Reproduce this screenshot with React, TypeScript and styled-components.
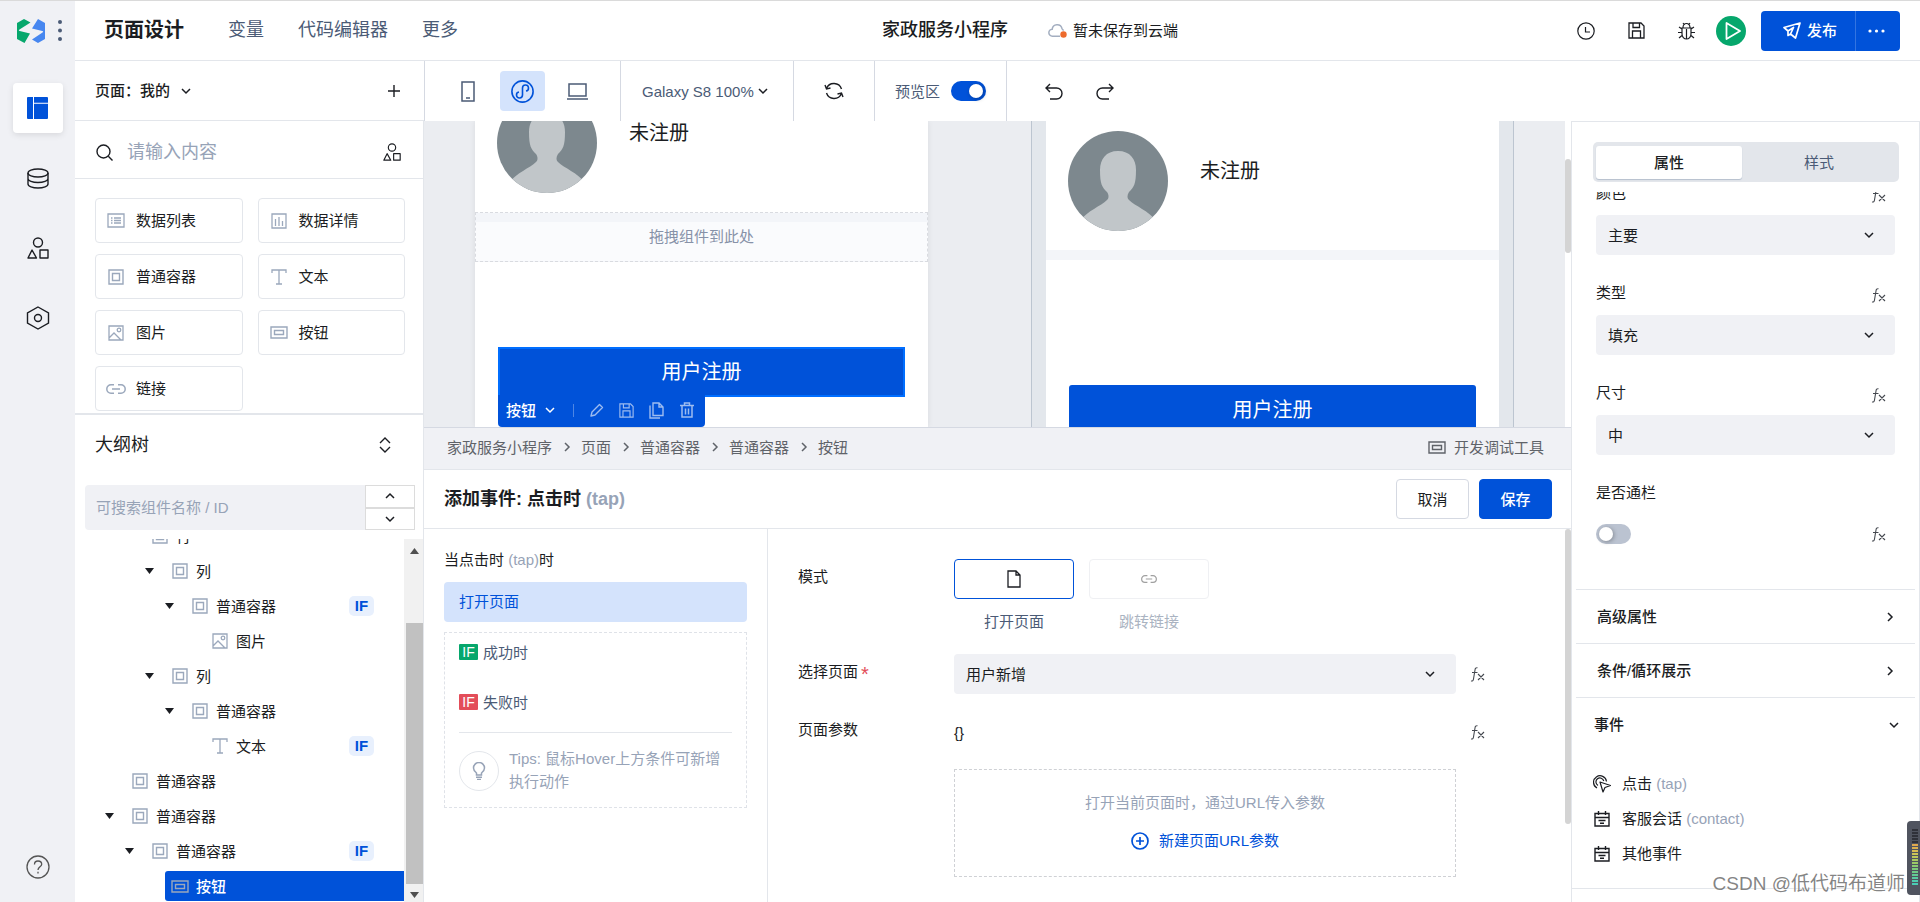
import React from 'react';
import styled, { createGlobalStyle, css } from 'styled-components';

const c = {
  blue: '#0052d9',
  blueSoft: '#d4e3fc',
  ink: '#1b1d22',
  slate: '#4b5b76',
  mute: '#97a3b7',
  line: '#e3e6eb',
  lineStrong: '#d5d9e2',
  fill: '#f0f1f5',
  canvas: '#ebedf1',
  green: '#06a76c',
  red: '#e34d59',
};

const Global = createGlobalStyle`
  * { box-sizing: border-box; }
  body {
    margin: 0;
    background: #fff;
    color: ${c.ink};
    font-family: "Liberation Sans", "Noto Sans CJK SC", sans-serif;
    font-size: 15px;
    line-height: 23px;
  }
  button, input, select { font: inherit; color: inherit; margin: 0; }
  h1, h2, h3, p, ul { margin: 0; padding: 0; font-size: inherit; font-weight: inherit; }
  li { list-style: none; }
  svg { display: block; flex: none; }
`;

/* ---------- icons ---------- */

const Svg = ({ w = 20, h = w, sw = 1.3, children }: { w?: number; h?: number; sw?: number; children: React.ReactNode }) => (
  <svg width={w} height={h} viewBox={`0 0 ${w} ${h}`} fill="none" stroke="currentColor" strokeWidth={sw} aria-hidden="true">
    {children}
  </svg>
);

const LogoIcon = () => (
  <svg width="28" height="24" viewBox="0 0 28 24" aria-hidden="true">
    <path d="M0 4L7 0l6.500 3.500L2.500 10.500c-1 .7-.8 1.300.2 1.500L13 14.500 7.500 24 0 20z" fill="#06a76c" />
    <path d="M21 0l7 4v16l-7 4-6-3.500 10.500-7c1-.7.8-1.300-.2-1.500L15 9.500z" fill="#4787f0" />
  </svg>
);
const DotsV = () => (
  <svg width="4" height="22" viewBox="0 0 4 22" fill={c.slate} aria-hidden="true">
    <circle cx="2" cy="2" r="2" /><circle cx="2" cy="10.500" r="2" /><circle cx="2" cy="19" r="2" />
  </svg>
);
const DotsH = () => (
  <svg width="17" height="4" viewBox="0 0 17 4" fill="#fff" aria-hidden="true">
    <circle cx="2" cy="2" r="1.600" /><circle cx="8.500" cy="2" r="1.600" /><circle cx="15" cy="2" r="1.600" />
  </svg>
);
const LayoutIcon = () => (
  <svg width="21" height="22" viewBox="0 0 21 22" fill={c.blue} aria-hidden="true">
    <path d="M1 0h5v22H1a1 1 0 0 1-1-1V1a1 1 0 0 1 1-1zM7 0h13a1 1 0 0 1 1 1v4.800H7zM7 6.800h14V21a1 1 0 0 1-1 1H7z" />
  </svg>
);
const DatabaseIcon = () => (
  <Svg w={22} h={21} sw={1.4}>
    <ellipse cx="11" cy="5" rx="10" ry="4" />
    <path d="M1 5v11c0 2.200 4.500 4 10 4s10-1.800 10-4V5M1 10.500c0 2.200 4.500 4 10 4s10-1.800 10-4" />
  </Svg>
);
const ShapesIcon = ({ small }: { small?: boolean }) => (
  <svg width={small ? 18 : 22} height={small ? 18 : 22} viewBox="0 0 22 22" fill="none" stroke="currentColor" strokeWidth={1.400} aria-hidden="true">
    <circle cx="11" cy="5.500" r="4.500" /><path d="M5 13l-4 8h8.500zM13 13h8v8h-8z" strokeLinejoin="round" />
  </svg>
);
const HexIcon = () => (
  <Svg w={24} sw={1.4}><path d="M12 1l10.500 5.800v10.400L12 23 1.500 17.200V6.800z" /><circle cx="12" cy="12" r="3.500" /></Svg>
);
const HelpIcon = () => (
  <Svg w={24} sw={1.3}><circle cx="12" cy="12" r="11" /><path d="M8.500 9.500C8.500 7 10 6 12 6s3.700 1.200 3.700 3.200c0 2.500-3.700 2.800-3.700 5.800M12 16.800v1.700" /></Svg>
);
const Chevron = ({ dir = 'down', s = 10 }: { dir?: 'down' | 'up' | 'right'; s?: number }) => (
  <svg width={s} height={s} viewBox="0 0 10 10" fill="none" stroke="currentColor" strokeWidth={1.500} aria-hidden="true">
    <path d={dir === 'down' ? 'M1 3l4 4 4-4' : dir === 'up' ? 'M1 7l4-4 4 4' : 'M3 1l4 4-4 4'} />
  </svg>
);
const PlusIcon = () => <Svg w={12} sw={1.4}><path d="M6 0v12M0 6h12" /></Svg>;
const SearchIcon = () => <Svg w={17} sw={1.4}><circle cx="7.500" cy="7.500" r="6.500" /><path d="M12.300 12.300L16.500 16.500" /></Svg>;
const ExpandIcon = () => <Svg w={12} h={16} sw={1.4}><path d="M1 6l5-5 5 5M1 10l5 5 5-5" /></Svg>;
const PhoneIcon = () => <Svg w={14} h={21} sw={1.5}><path d="M1 1h12v19H1zM5 17h4" /></Svg>;
const MiniIcon = () => (
  <Svg w={23} sw={1.6}>
    <circle cx="11.500" cy="11.500" r="10.600" />
    <path d="M11.500 8v7a3 3 0 1 1-3.500-3M11.500 15V8a3 3 0 1 1 3.500 3" />
  </Svg>
);
const LaptopIcon = () => <Svg w={21} h={17} sw={1.5}><path d="M2 1h17v12H2zM0 16h21" /></Svg>;
const RefreshIcon = () => (
  <Svg w={20} sw={1.4}>
    <path d="M2.500 7.500A8 8 0 0 1 17.500 8M17.500 12.500A8 8 0 0 1 2.500 12M1 4l1.500 4 4-1M19 16l-1.500-4-4 1" />
  </Svg>
);
const UndoIcon = () => <Svg w={18} h={17} sw={1.4}><path d="M5 1L1 5l4 4M1 5h10.500a5.500 5.500 0 0 1 0 11H5" /></Svg>;
const RedoIcon = () => <Svg w={18} h={17} sw={1.4}><path d="M13 1l4 4-4 4M17 5H6.500a5.500 5.500 0 0 0 0 11H13" /></Svg>;
const CloudIcon = () => (
  <svg width="19" height="15" viewBox="0 0 19 15" fill="none" aria-hidden="true">
    <path d="M12 13.200H4.500a3.500 3.500 0 0 1-.3-7A5 5 0 0 1 14 5.500c.3 1 .8 1.600 1.800 1.900" stroke="#a3aec0" strokeWidth="1.500" />
    <circle cx="15.500" cy="11.500" r="3.200" fill="#ed6b2d" />
  </svg>
);
const ClockIcon = () => <Svg w={18} sw={1.2}><circle cx="9" cy="9" r="8.200" /><path d="M8.500 5v5h4.500" /></Svg>;
const SaveIcon = ({ s = 17 }: { s?: number }) => (
  <svg width={s} height={s} viewBox="0 0 17 17" fill="none" stroke="currentColor" strokeWidth={1.300} aria-hidden="true">
    <path d="M1 1h12l3 3v12H1zM5 1v4.500h6.500V1M4.500 16V9h8v7" />
  </svg>
);
const BugIcon = () => (
  <Svg w={17} h={18} sw={1.2}>
    <path d="M5 5.500a3.500 4 0 0 1 7 0M4 6h9v6a4.500 5 0 0 1-9 0zM8.500 7v10M1 5l3 2M16 5l-3 2M0 10.500h4M13 10.500h4M1 16l3-2.500M16 16l-3-2.500M5 1l1.500 2M12 1l-1.500 2" />
  </Svg>
);
const PlayIcon = () => <Svg w={16} h={20} sw={1.8}><path d="M1.500 2v16L15 10z" strokeLinejoin="round" /></Svg>;
const SendIcon = () => <Svg w={18} h={17} sw={1.7}><path d="M17 1L1 5.500l4 3.500v4.500l2.500-1.500 5 4zM5 9l5.500-3.500L7.500 12" strokeLinejoin="round" /></Svg>;
const PencilIcon = () => <Svg w={15} sw={1.4}><path d="M2 13l1-4L10.500 1.500l3 3L6 12z" strokeLinejoin="round" /></Svg>;
const CopyIcon = () => <Svg w={15} h={17} sw={1.4}><path d="M4 1h6l4 4v8.500H4zM10 1v4h4M1 3.500V16h10" /></Svg>;
const TrashIcon = () => <Svg w={14} h={16} sw={1.5}><path d="M0 3.500h14M4.500 3V1h5v2M2 4v11h10V4M5.500 6.500v6M8.500 6.500v6" /></Svg>;
const FileIcon = () => <Svg w={14} h={18} sw={1.3}><path d="M1 1h8l4 4v12H1zM9 1v4h4" /></Svg>;
const LinkIcon = ({ w = 20 }: { w?: number }) => (
  <svg width={w} height={w / 2} viewBox="0 0 20 10" fill="none" stroke="currentColor" strokeWidth={1.500} aria-hidden="true">
    <path d="M8 .8H5a4.200 4.200 0 0 0 0 8.400h3M12 .8h3a4.200 4.200 0 0 1 0 8.400h-3M6 5h8" />
  </svg>
);
const ListIcon = () => (
  <Svg w={18} h={15}><path d="M1 1h16v13H1zM4 5h1.500M7 5h7M4 7.500h1.500M7 7.500h7M4 10h1.500M7 10h7" /></Svg>
);
const ChartIcon = () => <Svg w={16}><path d="M1 1h14v14H1zM4.500 6v7M8 4v9M11.500 8v5" /></Svg>;
const BoxIcon = () => <Svg w={16} sw={1.4}><path d="M1 1h14v14H1zM4.500 4.500h7v7h-7z" /></Svg>;
const TextIcon = () => <Svg w={16} sw={1.3}><path d="M1 4V1h14v3M8 1v14M5 15h6" /></Svg>;
const ImageIcon = () => <Svg w={16}><path d="M1 1h14v14H1zM1 13l5-5 7 7" /><circle cx="11" cy="5" r="1.800" /></Svg>;
const ButtonIcon = () => <Svg w={18} h={13} sw={1.4}><path d="M1 1h16v11H1zM4.500 4.500h9v4h-9z" /></Svg>;
const BulbIcon = () => (
  <Svg w={14} h={18} sw={1.5}><path d="M4.500 13v-2C2.500 9.500 1.500 8 1.500 6a5.500 5.500 0 0 1 11 0c0 2-1 3.500-3 5v2zM4 15.300h6M5 17.500h4" /></Svg>
);
const AddCircleIcon = () => <Svg w={18} sw={1.7}><circle cx="9" cy="9" r="8" /><path d="M9 5v8M5 9h8" /></Svg>;
const FxIcon = () => (
  <Svg w={15} h={15} sw={1.1}><path d="M7.500.8C5.800.5 5.200 1.500 5 3L3.500 12c-.2 1.500-.8 2.300-2.500 2M2 5.500h5.500M8 7l6 6M14 7l-6 6" /></Svg>
);
const TapIcon = () => (
  <Svg w={18} h={18} sw={1.2}>
    <path d="M7 7l3 10 2-4.500 5.500-2z" strokeLinejoin="round" />
    <path d="M4 13A6.500 6.500 0 1 1 13.500 6.500M5 10.500a4 4 0 1 1 5.800-4.500" />
  </Svg>
);
const CalendarIcon = () => <Svg w={16} h={16} sw={1.4}><path d="M1 2.500h14V15H1zM1 6.500h14M4.500 0v4M11.500 0v4M4.500 9.500h7M6 12.200h4" /></Svg>;
const Avatar = () => (
  <svg width="100" height="100" viewBox="0 0 100 100" role="img" aria-label="头像">
    <clipPath id="round"><circle cx="50" cy="50" r="50" /></clipPath>
    <g clipPath="url(#round)">
      <rect width="100" height="100" fill="#7d888e" />
      <path d="M50 20c12 0 18 8 18 19 0 14-2 17-7 22-2 3-2 6 0 8 6 6 20 11 26 20v13H13V89c6-9 20-14 26-20 2-2 2-5 0-8-5-5-7-8-7-22 0-11 6-19 18-19z" fill="#c1c6c9" />
    </g>
  </svg>
);
const Caret = ({ up }: { up?: boolean }) => (
  <svg width="9" height="6" viewBox="0 0 9 6" fill="currentColor" aria-hidden="true"><path d={up ? 'M0 6h9L4.500 0z' : 'M0 0h9L4.500 6z'} /></svg>
);

/* ---------- shared parts ---------- */

const PlainButton = styled.button`
  border: 0;
  padding: 0;
  background: none;
  display: flex;
  align-items: center;
  justify-content: center;
  cursor: pointer;
`;
const Mute = styled.span`color: ${c.mute};`;
const IconBox = styled.span<{ $w?: number; $color?: string }>`
  width: ${p => p.$w ?? 20}px;
  display: flex;
  flex: none;
  justify-content: center;
  color: ${p => p.$color ?? '#9ba8bc'};
`;
const Toggle = styled.input`
  appearance: none;
  width: 35px;
  height: 20px;
  border-radius: 10px;
  padding: 3px;
  background: #bbc3d1;
  display: flex;
  &::before {
    content: '';
    width: 14px;
    height: 14px;
    border-radius: 50%;
    background: #fff;
    box-shadow: 1px 1px 4px rgba(0, 0, 0, 0.3);
  }
  &:checked { background: ${c.blue}; justify-content: flex-end; }
`;
const SelectWrap = styled.div`position: relative; flex: 1; min-width: 0;`;
const SelectBox = styled.select`
  appearance: none;
  display: block;
  width: 100%;
  height: 40px;
  border: 0;
  border-radius: 4px;
  padding: 0 40px 0 12px;
  background: ${c.fill};
`;
const SelectArrow = styled.span<{ $right: number }>`
  position: absolute;
  top: 0;
  bottom: 0;
  right: ${p => p.$right}px;
  display: flex;
  align-items: center;
  color: ${c.ink};
  pointer-events: none;
`;
const Drop = ({ id, value }: { id: string; value: string }) => (
  <SelectWrap>
    <SelectBox id={id}><option>{value}</option></SelectBox>
    <SelectArrow $right={21}><Chevron /></SelectArrow>
  </SelectWrap>
);
const FxButton = styled(PlainButton)`color: #44484f;`;
const Fx = () => <FxButton type="button" aria-label="绑定表达式"><FxIcon /></FxButton>;

/* ---------- shell ---------- */

const Shell = styled.div`
  position: relative;
  display: flex;
  height: 100vh;
  min-height: 720px;
  border-top: 1px solid #dadada;
  overflow: hidden;
`;
const Rail = styled.nav`
  width: 75px;
  flex: none;
  background: ${c.fill};
  display: flex;
  flex-direction: column;
  align-items: center;
  padding: 18px 0 23px;
`;
const Brand = styled.div`
  display: flex;
  align-items: center;
  gap: 13px;
  height: 24px;
  padding-left: 4px;
  margin-bottom: 40px;
`;
const RailButton = styled(PlainButton)<{ $on?: boolean }>`
  width: 50px;
  height: 50px;
  margin-bottom: 20px;
  border-radius: 4px;
  ${p => p.$on && css`background: #fff; box-shadow: 0 2px 6px rgba(0, 0, 0, 0.1);`}
`;
const RailEnd = styled(PlainButton)`margin-top: auto; color: #555;`;
const Main = styled.div`flex: 1; min-width: 0; display: flex; flex-direction: column;`;
const Body = styled.div`flex: 1; min-height: 0; display: flex;`;

/* ---------- header ---------- */

const Header = styled.header`
  height: 60px;
  flex: none;
  display: flex;
  align-items: center;
  padding: 0 20px 0 29px;
  border-bottom: 1px solid ${c.line};
`;
const HeaderNav = styled.nav`flex: 1; display: flex; align-items: center; gap: 34px; font-size: 18px;`;
const Title = styled.h1`font-size: 20px; font-weight: 700; margin-right: 10px;`;
const NavLink = styled.a`color: ${c.slate}; text-decoration: none;`;
const HeaderCenter = styled.div`display: flex; align-items: center; padding-left: 56px;`;
const AppName = styled.h2`font-size: 18px; font-weight: 500; margin-right: 40px;`;
const SaveState = styled.span`display: flex; align-items: center; gap: 6px;`;
const HeaderActions = styled.div`flex: 1; display: flex; align-items: center; justify-content: flex-end;`;
const HeaderIcon = styled(PlainButton)`width: 50px; height: 40px;`;
const RunButton = styled(PlainButton)`
  width: 30px;
  height: 30px;
  margin: 0 15px 0 5px;
  padding-left: 3px;
  border-radius: 50%;
  background: ${c.green};
  color: #fff;
`;
const PublishGroup = styled.div`display: flex; border-radius: 4px; background: ${c.blue}; color: #fff;`;
const Publish = styled(PlainButton)`
  width: 95px;
  height: 40px;
  padding-left: 4px;
  gap: 6px;
  font-weight: 500;
  border-right: 1px solid #3374e1;
`;
const PublishMore = styled(PlainButton)`width: 44px; height: 40px; padding-right: 4px;`;

/* ---------- left panel ---------- */

const Left = styled.aside`width: 349px; flex: none; display: flex; flex-direction: column;`;
const PageHead = styled.div`
  height: 60px;
  flex: none;
  display: flex;
  align-items: center;
  justify-content: space-between;
  padding: 0 24px 0 20px;
  border-bottom: 1px solid ${c.line};
`;
const PagePick = styled(PlainButton)`gap: 11px; font-weight: 500;`;
const LeftBody = styled.div`
  flex: 1;
  min-height: 0;
  display: flex;
  flex-direction: column;
  border-right: 1px solid ${c.line};
`;
const SearchRow = styled.div`
  height: 58px;
  flex: none;
  display: flex;
  align-items: center;
  padding: 5px 22px 0 21px;
  border-bottom: 1px solid ${c.line};
`;
const SearchInput = styled.input`
  flex: 1;
  min-width: 0;
  border: 0;
  outline: 0;
  background: none;
  padding: 0 0 0 14px;
  font-size: 18px;
  &::placeholder { color: ${c.mute}; opacity: 1; }
`;
const Palette = styled.div`
  display: grid;
  grid-template-columns: 1fr 1fr;
  gap: 11px 15px;
  padding: 19px 18px 2px 20px;
  border-bottom: 2px solid ${c.line};
`;
const PaletteCard = styled(PlainButton)`
  height: 45px;
  justify-content: flex-start;
  gap: 10px;
  padding-left: 10px;
  border: 1px solid ${c.line};
  border-radius: 4px;
`;
const OutlineHead = styled.div`
  display: flex;
  align-items: center;
  justify-content: space-between;
  height: 60px;
  padding: 0 32px 0 20px;
  font-size: 18px;
`;
const OutlineSearch = styled.div`display: flex; height: 45px; margin: 10px 8px 9px 10px; flex: none;`;
const OutlineInput = styled.input`
  flex: 1;
  min-width: 0;
  border: 0;
  border-radius: 4px 0 0 4px;
  background: ${c.fill};
  padding: 0 11px;
  &::placeholder { color: ${c.mute}; opacity: 1; }
`;
const Stepper = styled.div`width: 50px; display: flex; flex-direction: column;`;
const StepButton = styled(PlainButton)`
  flex: 1;
  border: 1px solid #dcdcdc;
`;
const TreeArea = styled.div`flex: 1; min-height: 0; display: flex; overflow: hidden;`;
const Tree = styled.ul`flex: 1; margin-top: -20px;`;
const TreeRow = styled.li<{ $indent: number }>`
  height: 35px;
  display: flex;
  align-items: center;
  padding: 2px 0 3px ${p => p.$indent}px;
`;
const TreeNode = styled.div<{ $on?: boolean }>`
  flex: 1;
  height: 30px;
  display: flex;
  align-items: center;
  padding-left: 5px;
  gap: 6px;
  border-radius: 3px 0 0 3px;
  ${p => p.$on && css`background: ${c.blue}; color: #fff; font-weight: 500;`}
`;
const CaretSlot = styled.span`width: 20px; flex: none;`;
const IfTag = styled.span`
  margin: 0 30px 0 auto;
  width: 25px;
  height: 20px;
  border-radius: 5px;
  background: #e8f0fd;
  color: ${c.blue};
  font-weight: 700;
  line-height: 20px;
  text-align: center;
`;
const TreeScroll = styled.div`
  width: 19px;
  display: flex;
  flex-direction: column;
  align-items: center;
  gap: 8px;
  padding: 9px 0 4px 2px;
  background: #f1f1f1;
  color: #505050;
`;
const TreeTrack = styled.div`flex: 1; align-self: stretch; display: flex; align-items: flex-end;`;
const TreeThumb = styled.div`width: 100%; height: 81%; background: #c1c1c1;`;

/* ---------- toolbar and canvas ---------- */

const Work = styled.div`flex: 1; min-width: 0; display: flex; flex-direction: column;`;
const Toolbar = styled.div`height: 60px; flex: none; display: flex; border-left: 1px solid ${c.lineStrong};`;
const ToolGroup = styled.div<{ $pad?: number; $gap?: number; $open?: boolean }>`
  display: flex;
  align-items: center;
  gap: ${p => p.$gap ?? 10}px;
  padding: 0 ${p => p.$pad ?? 20}px;
  border-right: ${p => (p.$open ? 0 : 1)}px solid ${c.lineStrong};
  color: ${c.slate};
`;
const Device = styled(PlainButton)<{ $on?: boolean }>`
  width: 45px;
  height: 40px;
  border-radius: 4px;
  color: ${p => (p.$on ? c.blue : c.slate)};
  background: ${p => (p.$on ? c.blueSoft : 'none')};
`;
const ToolIcon = styled(PlainButton)`width: 30px; height: 30px; color: ${c.ink};`;
const DeviceSelectWrap = styled.div`position: relative; color: ${c.slate};`;
const DeviceSelect = styled.select`
  appearance: none;
  display: block;
  border: 0;
  background: none;
  height: 30px;
  width: 130px;
  padding: 0;
`;
const PreviewLabel = styled.label`display: flex; align-items: center; gap: 11px;`;
const Columns = styled.div`flex: 1; min-height: 0; display: flex;`;
const Center = styled.main`flex: 1; min-width: 0; display: flex; flex-direction: column;`;
const CanvasRow = styled.div`height: 306px; flex: none; display: flex; overflow: hidden;`;
const Canvas = styled.div`
  flex: 1;
  min-width: 0;
  display: flex;
  gap: 103px;
  padding: 0 51px;
  background: ${c.canvas};
`;
const Screen = styled.div<{ $flat?: boolean }>`
  width: 453px;
  height: 100%;
  flex: none;
  display: flex;
  flex-direction: column;
  background: #fff;
  box-shadow: ${p => (p.$flat ? 'none' : '0 0 6px rgba(0, 0, 0, 0.08)')};
`;
const PreviewFrame = styled.div`
  flex: none;
  padding: 0 14px;
  background: #e3e7ec;
  border: 1px solid #bcc5d0;
  border-width: 0 1px;
`;
const Profile = styled.div<{ $top: number }>`
  flex: none;
  display: flex;
  gap: 32px;
  padding: 0 22px 19px;
  margin-top: ${p => p.$top}px;
  font-size: 20px;
  line-height: 80px;
`;
const DropZone = styled.div`
  flex: none;
  height: 50px;
  border: 1px dashed #d9dbe0;
  background: linear-gradient(#f3f5f9 9px, #fafbfd 9px);
  color: #8792a8;
  line-height: 48px;
  text-align: center;
`;
const Strip = styled.div`flex: none; height: 10px; background: #f3f5f9;`;
const Selected = styled.div`position: relative; margin: 85px 23px 0;`;
const BigButton = styled.button<{ $picked?: boolean }>`
  display: block;
  width: 100%;
  height: 50px;
  border: ${p => (p.$picked ? '2px solid #006eff' : '0')};
  background: ${c.blue};
  color: #fff;
  font-size: 20px;
`;
const PreviewButton = styled.div`margin: 125px 23px 0; flex: none; border-radius: 3px; overflow: hidden;`;
const FloatBar = styled.div`
  position: absolute;
  left: 0;
  top: 48px;
  height: 32px;
  display: flex;
  align-items: center;
  gap: 15px;
  padding: 0 11px 2px 8px;
  border-radius: 0 0 4px 4px;
  background: ${c.blue};
`;
const FloatName = styled(PlainButton)`gap: 9px; color: #fff; font-weight: 500; margin-right: 3px;`;
const FloatLine = styled.span`width: 1px; height: 13px; background: #4d86e4;`;
const ScrollLane = styled.div<{ $pad: number }>`width: 6px; flex: none; padding-top: ${p => p.$pad}px; background: #fff;`;
const Thumb = styled.div<{ $size: number }>`height: ${p => p.$size}%; border-radius: 3px; background: #d4d4d4;`;

/* ---------- event editor ---------- */

const Crumbs = styled.div`
  height: 43px;
  flex: none;
  display: flex;
  align-items: center;
  padding: 0 27px 3px 23px;
  border-top: 1px solid ${c.lineStrong};
  border-bottom: 1px solid ${c.line};
  background: ${c.fill};
  color: #5f6369;
`;
const CrumbLink = styled.a`color: inherit; text-decoration: none;`;
const CrumbSep = styled.span`width: 29px; display: flex; justify-content: center;`;
const DevTools = styled(PlainButton)`margin-left: auto; gap: 8px;`;
const EventHead = styled.div`
  height: 59px;
  flex: none;
  display: flex;
  align-items: center;
  gap: 10px;
  padding: 0 19px 0 20px;
  border-bottom: 1px solid ${c.line};
`;
const EventTitle = styled.h3`flex: 1; font-size: 18px; font-weight: 700;`;
const ActionButton = styled.button<{ $primary?: boolean }>`
  width: 73px;
  height: 40px;
  border: 1px solid ${p => (p.$primary ? c.blue : c.lineStrong)};
  border-radius: 4px;
  background: ${p => (p.$primary ? c.blue : '#fff')};
  color: ${p => (p.$primary ? '#fff' : c.ink)};
  font-weight: ${p => (p.$primary ? 500 : 400)};
`;
const EventBody = styled.div`flex: 1; min-height: 0; display: flex; overflow: hidden;`;
const Flow = styled.section`width: 344px; flex: none; padding: 19px 20px 0; border-right: 1px solid ${c.line};`;
const FlowItem = styled.button`
  display: block;
  width: 100%;
  height: 40px;
  margin: 11px 0 10px;
  padding: 0 15px 2px;
  border: 0;
  border-radius: 4px;
  background: ${c.blueSoft};
  color: ${c.blue};
  text-align: left;
`;
const FlowBox = styled.div`padding: 4px 14px 14px; border: 1px dashed #dfe2e8;`;
const Branches = styled.div`display: grid; gap: 20px; padding-bottom: 15px;`;
const Branch = styled.div`height: 30px; display: flex; align-items: center; gap: 5px; color: ${c.slate};`;
const BranchTag = styled.span<{ $bg: string }>`
  width: 19px;
  height: 16px;
  border-radius: 1px;
  background: ${p => p.$bg};
  color: #fff;
  font-size: 14px;
  line-height: 16px;
  text-align: center;
`;
const Tips = styled.div`
  display: flex;
  gap: 10px;
  padding-top: 14px;
  border-top: 1px solid ${c.line};
  color: ${c.mute};
`;
const TipsIcon = styled.span`
  width: 40px;
  height: 40px;
  margin-top: 4px;
  flex: none;
  display: flex;
  align-items: center;
  justify-content: center;
  border: 1px solid ${c.line};
  border-radius: 50%;
`;
const Form = styled.section`
  flex: 1;
  min-width: 0;
  display: grid;
  grid-template-columns: 156px 1fr 42px;
  align-content: start;
  padding: 30px 67px 0 30px;
`;
const FormLabel = styled.label`padding-top: 6px; display: flex; gap: 3px;`;
const Star = styled.span`color: ${c.red}; font-size: 20px; line-height: 29px;`;
const Modes = styled.div`display: flex; gap: 15px; height: 95px;`;
const Mode = styled.button<{ $on?: boolean }>`
  width: 120px;
  height: 74px;
  border: 0;
  padding: 0;
  background: none;
  color: ${p => (p.$on ? c.slate : '#aab3c1')};
`;
const ModeIcon = styled.span<{ $on?: boolean }>`
  height: 40px;
  margin-bottom: 11px;
  display: flex;
  align-items: center;
  justify-content: center;
  border: 1px solid ${p => (p.$on ? c.blue : '#eff0f3')};
  border-radius: 4px;
  color: ${p => (p.$on ? c.ink : '#a0a0a0')};
`;
const FieldRow = styled.div`display: flex; align-items: center; height: 40px; margin-bottom: 18px;`;
const FormFx = styled.div`display: flex; align-items: center; height: 40px; padding-left: 14px;`;
const ParamBox = styled.div`
  grid-column: 2;
  height: 108px;
  margin-top: -1px;
  padding-top: 21px;
  border: 1px dashed #cfd1d5;
  text-align: center;
  color: ${c.mute};
`;
const AddParam = styled(PlainButton)`margin: 15px auto 0; gap: 10px; color: ${c.blue};`;

/* ---------- property panel ---------- */

const Props = styled.aside`
  width: 349px;
  flex: none;
  display: flex;
  flex-direction: column;
  border: 1px solid ${c.line};
  border-bottom: 0;
`;
const Tabs = styled.div`
  display: flex;
  height: 40px;
  flex: none;
  margin: 20px 20px 10px 21px;
  padding: 4px 3px 3px;
  border-radius: 5px;
  background: ${c.line};
`;
const Tab = styled.button<{ $on?: boolean }>`
  flex: ${p => (p.$on ? '0 0 146px' : '1')};
  border: 0;
  border-radius: 3px;
  background: ${p => (p.$on ? '#fff' : 'none')};
  color: ${p => (p.$on ? c.ink : c.slate)};
  font-weight: ${p => (p.$on ? 500 : 400)};
  box-shadow: ${p => (p.$on ? '0 1px 1px #b5bfce' : 'none')};
`;
const PropScroll = styled.div`flex: 1; min-height: 0; overflow: hidden;`;
const PropList = styled.div`margin-top: -12px; padding: 0 24px 9px;`;
const Prop = styled.div`height: 100px;`;
const PropHead = styled.div`
  height: 35px;
  display: flex;
  align-items: center;
  justify-content: space-between;
  padding: 0 9px 10px 0;
  & > button { margin-top: 5px; }
`;
const ToggleRow = styled.div`
  display: flex;
  align-items: center;
  justify-content: space-between;
  padding-right: 9px;
  height: 38px;
`;
const Fold = styled.button<{ $flush?: boolean }>`
  width: calc(100% - 8px);
  height: 54px;
  margin: 0 4px;
  padding: ${p => (p.$flush ? '0 16px 0 18px' : '0 20px 0 21px')};
  display: flex;
  align-items: center;
  justify-content: space-between;
  border: 0;
  border-top: 1px solid ${c.line};
  background: none;
  font-weight: 500;
`;
const Events = styled.ul`padding: 15px 20px 17px 21px; border-bottom: 1px solid ${c.line};`;
const EventItem = styled.li`height: 35px; display: flex; align-items: center; gap: 12px;`;

/* ---------- overlays ---------- */

const Watermark = styled.div`
  position: absolute;
  right: 15px;
  bottom: 6px;
  font-size: 19px;
  line-height: 24px;
  color: rgba(110, 110, 110, 0.85);
  text-shadow: 0 0 2px #fff;
`;
const Meter = styled.div`
  position: absolute;
  right: 0;
  bottom: 7px;
  width: 13px;
  height: 74px;
  padding: 8px 2px 0 5px;
  border-radius: 4px 0 0 4px;
  background: #50545f;
`;

const palette: [string, React.ReactNode][] = [
  ['数据列表', <ListIcon />],
  ['数据详情', <ChartIcon />],
  ['普通容器', <BoxIcon />],
  ['文本', <TextIcon />],
  ['图片', <ImageIcon />],
  ['按钮', <ButtonIcon />],
  ['链接', <LinkIcon />],
];

type Node = { name: string; level: number; icon?: 'text' | 'image' | 'button'; open?: boolean; cond?: boolean; on?: boolean };
const nodes: Node[] = [
  { name: '行', level: 1 },
  { name: '列', level: 2, open: true },
  { name: '普通容器', level: 3, open: true, cond: true },
  { name: '图片', level: 4, icon: 'image' },
  { name: '列', level: 2, open: true },
  { name: '普通容器', level: 3, open: true },
  { name: '文本', level: 4, icon: 'text', cond: true },
  { name: '普通容器', level: 0 },
  { name: '普通容器', level: 0, open: true },
  { name: '普通容器', level: 1, open: true, cond: true },
  { name: '按钮', level: 2, icon: 'button', on: true },
];
const nodeIcon = { text: <TextIcon />, image: <ImageIcon />, button: <ButtonIcon /> };

const meterColors = ['#2f3139', '#2f3139', '#2f3139', '#2f3139', '#2f3139', '#e0a94f', '#dcb14f', '#d6bb52', '#cbc457', '#bcc75b', '#a9c960', '#9bca67', '#8bcb70', '#7ccb7a', '#6ecb86', '#62cc94', '#58cca1', '#50ccae', '#4accb4'];

export default function App() {
  return (
    <>
      <Global />
      <Shell>
        <Rail aria-label="工作区">
          <Brand><LogoIcon /><DotsV /></Brand>
          <RailButton $on aria-label="页面"><LayoutIcon /></RailButton>
          <RailButton aria-label="数据"><DatabaseIcon /></RailButton>
          <RailButton aria-label="组件"><ShapesIcon /></RailButton>
          <RailButton aria-label="设置"><HexIcon /></RailButton>
          <RailEnd aria-label="帮助"><HelpIcon /></RailEnd>
        </Rail>
        <Main>
          <Header>
            <HeaderNav>
              <Title>页面设计</Title>
              <NavLink href="#vars">变量</NavLink>
              <NavLink href="#code">代码编辑器</NavLink>
              <NavLink href="#more">更多</NavLink>
            </HeaderNav>
            <HeaderCenter>
              <AppName>家政服务小程序</AppName>
              <SaveState><CloudIcon />暂未保存到云端</SaveState>
            </HeaderCenter>
            <HeaderActions>
              <HeaderIcon aria-label="历史"><ClockIcon /></HeaderIcon>
              <HeaderIcon aria-label="保存页面"><SaveIcon /></HeaderIcon>
              <HeaderIcon aria-label="调试"><BugIcon /></HeaderIcon>
              <RunButton aria-label="运行"><PlayIcon /></RunButton>
              <PublishGroup>
                <Publish><SendIcon />发布</Publish>
                <PublishMore aria-label="更多发布选项"><DotsH /></PublishMore>
              </PublishGroup>
            </HeaderActions>
          </Header>
          <Body>
            <Left>
              <PageHead>
                <PagePick>页面：我的<Chevron /></PagePick>
                <PlainButton aria-label="新建页面"><PlusIcon /></PlainButton>
              </PageHead>
              <LeftBody>
                <SearchRow>
                  <SearchIcon />
                  <SearchInput aria-label="搜索组件" placeholder="请输入内容" />
                  <PlainButton aria-label="组件库"><ShapesIcon small /></PlainButton>
                </SearchRow>
                <Palette>
                  {palette.map(([name, icon]) => (
                    <PaletteCard key={name}><IconBox>{icon}</IconBox>{name}</PaletteCard>
                  ))}
                </Palette>
                <OutlineHead>
                  大纲树
                  <PlainButton aria-label="展开大纲树"><ExpandIcon /></PlainButton>
                </OutlineHead>
                <OutlineSearch>
                  <OutlineInput aria-label="搜索大纲树" placeholder="可搜索组件名称 / ID" />
                  <Stepper>
                    <StepButton aria-label="上一个"><Chevron dir="up" /></StepButton>
                    <StepButton aria-label="下一个"><Chevron /></StepButton>
                  </Stepper>
                </OutlineSearch>
                <TreeArea>
                  <Tree>
                    {nodes.map((n, i) => (
                      <TreeRow key={i} $indent={30 + n.level * 20}>
                        <CaretSlot>{n.open && <Caret />}</CaretSlot>
                        <TreeNode $on={n.on}>
                          <IconBox>{n.icon ? nodeIcon[n.icon] : <BoxIcon />}</IconBox>
                          {n.name}
                          {n.cond && <IfTag>IF</IfTag>}
                        </TreeNode>
                      </TreeRow>
                    ))}
                  </Tree>
                  <TreeScroll>
                    <Caret up />
                    <TreeTrack><TreeThumb /></TreeTrack>
                    <Caret />
                  </TreeScroll>
                </TreeArea>
              </LeftBody>
            </Left>
            <Work>
              <Toolbar>
                <ToolGroup>
                  <Device aria-label="手机"><PhoneIcon /></Device>
                  <Device $on aria-label="小程序"><MiniIcon /></Device>
                  <Device aria-label="电脑"><LaptopIcon /></Device>
                </ToolGroup>
                <ToolGroup $pad={21}>
                  <DeviceSelectWrap>
                    <DeviceSelect aria-label="设备与缩放"><option>Galaxy S8 100%</option></DeviceSelect>
                    <SelectArrow $right={4}><Chevron /></SelectArrow>
                  </DeviceSelectWrap>
                </ToolGroup>
                <ToolGroup $pad={25}><ToolIcon aria-label="刷新"><RefreshIcon /></ToolIcon></ToolGroup>
                <ToolGroup>
                  <PreviewLabel>预览区<Toggle type="checkbox" defaultChecked /></PreviewLabel>
                </ToolGroup>
                <ToolGroup $pad={32} $gap={21} $open>
                  <ToolIcon aria-label="撤销"><UndoIcon /></ToolIcon>
                  <ToolIcon aria-label="重做"><RedoIcon /></ToolIcon>
                </ToolGroup>
              </Toolbar>
              <Columns>
                <Center>
                  <CanvasRow>
                    <Canvas>
                      <Screen>
                        <Profile $top={-28}><Avatar />未注册</Profile>
                        <DropZone>拖拽组件到此处</DropZone>
                        <Selected>
                          <BigButton $picked>用户注册</BigButton>
                          <FloatBar>
                            <FloatName>按钮<Chevron /></FloatName>
                            <FloatLine />
                            <PlainButton aria-label="编辑"><IconBox $w={15} $color="#9dbcf0"><PencilIcon /></IconBox></PlainButton>
                            <PlainButton aria-label="保存组件"><IconBox $w={15} $color="#9dbcf0"><SaveIcon s={15} /></IconBox></PlainButton>
                            <PlainButton aria-label="复制"><IconBox $w={15} $color="#9dbcf0"><CopyIcon /></IconBox></PlainButton>
                            <PlainButton aria-label="删除"><IconBox $w={15} $color="#9dbcf0"><TrashIcon /></IconBox></PlainButton>
                          </FloatBar>
                        </Selected>
                      </Screen>
                      <PreviewFrame>
                        <Screen $flat>
                          <Profile $top={10}><Avatar />未注册</Profile>
                          <Strip />
                          <PreviewButton><BigButton>用户注册</BigButton></PreviewButton>
                        </Screen>
                      </PreviewFrame>
                    </Canvas>
                    <ScrollLane $pad={38}><Thumb $size={35} /></ScrollLane>
                  </CanvasRow>
                  <Crumbs>
                    {['家政服务小程序', '页面', '普通容器', '普通容器', '按钮'].map((t, i) => (
                      <React.Fragment key={i}>
                        {i > 0 && <CrumbSep><Chevron dir="right" /></CrumbSep>}
                        <CrumbLink href="#node">{t}</CrumbLink>
                      </React.Fragment>
                    ))}
                    <DevTools><IconBox $w={18} $color="#5f6369"><ButtonIcon /></IconBox>开发调试工具</DevTools>
                  </Crumbs>
                  <EventHead>
                    <EventTitle>添加事件: 点击时 <Mute>(tap)</Mute></EventTitle>
                    <ActionButton>取消</ActionButton>
                    <ActionButton $primary>保存</ActionButton>
                  </EventHead>
                  <EventBody>
                    <Flow>
                      <p>当点击时 <Mute>(tap)</Mute>时</p>
                      <FlowItem>打开页面</FlowItem>
                      <FlowBox>
                        <Branches>
                          <Branch><BranchTag $bg={c.green}>IF</BranchTag>成功时</Branch>
                          <Branch><BranchTag $bg={c.red}>IF</BranchTag>失败时</Branch>
                        </Branches>
                        <Tips>
                          <TipsIcon><BulbIcon /></TipsIcon>
                          <p>Tips: 鼠标Hover上方条件可新增执行动作</p>
                        </Tips>
                      </FlowBox>
                    </Flow>
                    <Form>
                      <FormLabel as="span">模式</FormLabel>
                      <Modes>
                        <Mode $on><ModeIcon $on><FileIcon /></ModeIcon>打开页面</Mode>
                        <Mode><ModeIcon><LinkIcon w={16} /></ModeIcon>跳转链接</Mode>
                      </Modes>
                      <span />
                      <FormLabel htmlFor="target">选择页面<Star>*</Star></FormLabel>
                      <FieldRow><Drop id="target" value="用户新增" /></FieldRow>
                      <FormFx><Fx /></FormFx>
                      <FormLabel as="span">页面参数</FormLabel>
                      <FieldRow>{'{}'}</FieldRow>
                      <FormFx><Fx /></FormFx>
                      <ParamBox>
                        <p>打开当前页面时，通过URL传入参数</p>
                        <AddParam><AddCircleIcon />新建页面URL参数</AddParam>
                      </ParamBox>
                    </Form>
                    <ScrollLane $pad={0}><Thumb $size={79} /></ScrollLane>
                  </EventBody>
                </Center>
                <Props>
                  <Tabs role="tablist">
                    <Tab role="tab" aria-selected="true" $on>属性</Tab>
                    <Tab role="tab" aria-selected="false">样式</Tab>
                  </Tabs>
                  <PropScroll>
                    <PropList>
                      {[['颜色', '主要', 'color'], ['类型', '填充', 'kind'], ['尺寸', '中', 'size']].map(([label, value, id]) => (
                        <Prop key={id}>
                          <PropHead><label htmlFor={id}>{label}</label><Fx /></PropHead>
                          <Drop id={id} value={value} />
                        </Prop>
                      ))}
                      <Prop>
                        <PropHead><label htmlFor="full">是否通栏</label></PropHead>
                        <ToggleRow><Toggle id="full" type="checkbox" /><Fx /></ToggleRow>
                      </Prop>
                    </PropList>
                    <Fold>高级属性<Chevron dir="right" /></Fold>
                    <Fold>条件/循环展示<Chevron dir="right" /></Fold>
                    <Fold $flush>事件<Chevron /></Fold>
                    <Events>
                      <EventItem><IconBox $w={17} $color={c.ink}><TapIcon /></IconBox><span>点击 <Mute>(tap)</Mute></span></EventItem>
                      <EventItem><IconBox $w={17} $color={c.ink}><CalendarIcon /></IconBox><span>客服会话 <Mute>(contact)</Mute></span></EventItem>
                      <EventItem><IconBox $w={17} $color={c.ink}><CalendarIcon /></IconBox>其他事件</EventItem>
                    </Events>
                  </PropScroll>
                </Props>
              </Columns>
            </Work>
          </Body>
        </Main>
        <Watermark>CSDN @低代码布道师</Watermark>
        <Meter>
          <svg width="6" height="58" viewBox="0 0 6 58" aria-hidden="true">
            {meterColors.map((fill, i) => <rect key={i} x="0" y={i * 3} width="6" height="2" fill={fill} />)}
          </svg>
        </Meter>
      </Shell>
    </>
  );
}
